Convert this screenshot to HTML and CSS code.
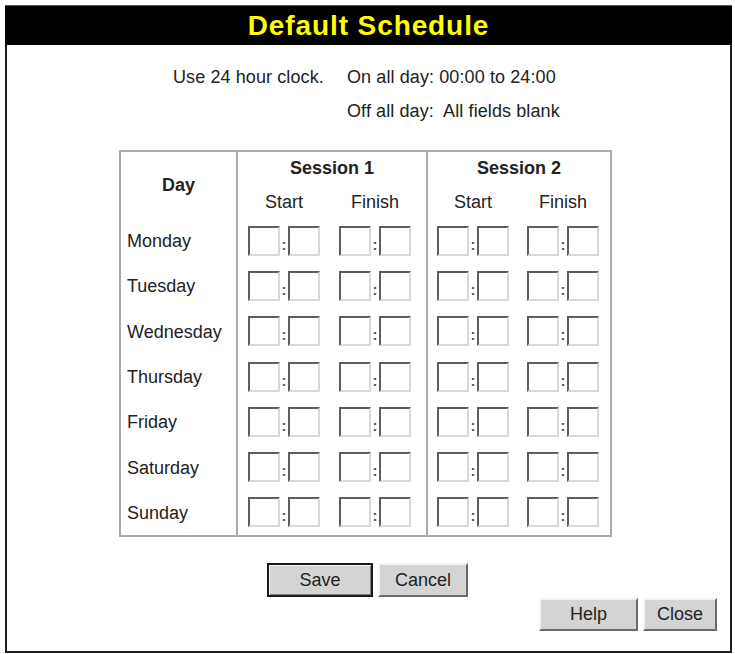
FILE: index.html
```html
<!DOCTYPE html>
<html>
<head>
<meta charset="utf-8">
<title>Default Schedule</title>
<link rel="stylesheet" href="styles.css">
</head>
<body>
<div class="frame">
  <div class="header"><h1 class="title">Default Schedule</h1></div>
  <div class="content">
    <div class="info">
      <span class="info-cell">Use 24 hour clock.</span>
      <span class="info-cell">On all day: 00:00 to 24:00</span>
      <span class="info-cell"></span>
      <span class="info-cell">Off all day:&nbsp; All fields blank</span>
    </div>

    <div class="sched">
      <div class="col col-day">
        <div class="day-head">Day</div>
        <div class="row day-label">Monday</div>
        <div class="row day-label">Tuesday</div>
        <div class="row day-label">Wednesday</div>
        <div class="row day-label">Thursday</div>
        <div class="row day-label">Friday</div>
        <div class="row day-label">Saturday</div>
        <div class="row day-label">Sunday</div>
      </div>

      <div class="col col-session s1">
        <div class="sess-title">Session 1</div>
        <div class="sub"><span class="sub-label">Start</span><span class="sub-label">Finish</span></div>
        <div class="row pairs"><span class="pair"><input class="tb"><span class="colon">:</span><input class="tb"></span><span class="pair"><input class="tb"><span class="colon">:</span><input class="tb"></span></div>
        <div class="row pairs"><span class="pair"><input class="tb"><span class="colon">:</span><input class="tb"></span><span class="pair"><input class="tb"><span class="colon">:</span><input class="tb"></span></div>
        <div class="row pairs"><span class="pair"><input class="tb"><span class="colon">:</span><input class="tb"></span><span class="pair"><input class="tb"><span class="colon">:</span><input class="tb"></span></div>
        <div class="row pairs"><span class="pair"><input class="tb"><span class="colon">:</span><input class="tb"></span><span class="pair"><input class="tb"><span class="colon">:</span><input class="tb"></span></div>
        <div class="row pairs"><span class="pair"><input class="tb"><span class="colon">:</span><input class="tb"></span><span class="pair"><input class="tb"><span class="colon">:</span><input class="tb"></span></div>
        <div class="row pairs"><span class="pair"><input class="tb"><span class="colon">:</span><input class="tb"></span><span class="pair"><input class="tb"><span class="colon">:</span><input class="tb"></span></div>
        <div class="row pairs"><span class="pair"><input class="tb"><span class="colon">:</span><input class="tb"></span><span class="pair"><input class="tb"><span class="colon">:</span><input class="tb"></span></div>
      </div>

      <div class="col col-session s2">
        <div class="sess-title">Session 2</div>
        <div class="sub"><span class="sub-label">Start</span><span class="sub-label">Finish</span></div>
        <div class="row pairs"><span class="pair"><input class="tb"><span class="colon">:</span><input class="tb"></span><span class="pair"><input class="tb"><span class="colon">:</span><input class="tb"></span></div>
        <div class="row pairs"><span class="pair"><input class="tb"><span class="colon">:</span><input class="tb"></span><span class="pair"><input class="tb"><span class="colon">:</span><input class="tb"></span></div>
        <div class="row pairs"><span class="pair"><input class="tb"><span class="colon">:</span><input class="tb"></span><span class="pair"><input class="tb"><span class="colon">:</span><input class="tb"></span></div>
        <div class="row pairs"><span class="pair"><input class="tb"><span class="colon">:</span><input class="tb"></span><span class="pair"><input class="tb"><span class="colon">:</span><input class="tb"></span></div>
        <div class="row pairs"><span class="pair"><input class="tb"><span class="colon">:</span><input class="tb"></span><span class="pair"><input class="tb"><span class="colon">:</span><input class="tb"></span></div>
        <div class="row pairs"><span class="pair"><input class="tb"><span class="colon">:</span><input class="tb"></span><span class="pair"><input class="tb"><span class="colon">:</span><input class="tb"></span></div>
        <div class="row pairs"><span class="pair"><input class="tb"><span class="colon">:</span><input class="tb"></span><span class="pair"><input class="tb"><span class="colon">:</span><input class="tb"></span></div>
      </div>
    </div>

    <div class="actions">
      <button class="btn btn-default btn-save">Save</button>
      <button class="btn btn-cancel">Cancel</button>
    </div>
    <div class="actions-right">
      <button class="btn btn-help">Help</button>
      <button class="btn btn-close">Close</button>
    </div>
  </div>
</div>
</body>
</html>
```

FILE: styles.css
```css
* { box-sizing: border-box; }

html, body {
  margin: 0;
  padding: 0;
  background: #ffffff;
}

body {
  font-family: "Liberation Sans", Arial, sans-serif;
  font-size: 18px;
  color: #222222;
}

.frame {
  margin: 5px 0 0 5px;
  width: 727px;
  height: 648px;
  border: 2px solid #1e1e1e;
  border-top: none;
  display: flex;
  flex-direction: column;
}

.header {
  margin: 0 -2px;
  height: 40px;
  background: #000000;
  border-top: 1px solid #555;
  display: flex;
  align-items: center;
  justify-content: center;
}

.title {
  margin: 0;
  font-family: "Liberation Sans", Arial, sans-serif;
  font-weight: bold;
  font-size: 28px;
  letter-spacing: 0.9px;
  color: #ffff00;
  line-height: 1;
}

.content {
  flex: 1;
  display: flex;
  flex-direction: column;
}

.info {
  margin: 15px 0 0 166px;
  display: grid;
  grid-template-columns: 154px auto;
  grid-auto-rows: 34px;
  column-gap: 20px;
  justify-content: start;
  align-items: center;
}

.info-cell { white-space: nowrap; letter-spacing: 0.1px; }

.sched {
  margin: 22px 0 0 112px;
  width: 493px;
  display: flex;
  border: 2px solid #ababab;
}

.col { display: flex; flex-direction: column; }

.col-day { width: 115px; }

.col-session { border-left: 2px solid #ababab; }
.s1 { width: 190px; }
.s2 { width: 184px; }

.day-head {
  height: 66px;
  display: flex;
  align-items: center;
  justify-content: center;
  font-weight: bold;
}

.row { height: 45.3px; display: flex; align-items: center; }

.day-label { padding-left: 6px; padding-top: 2px; }

.sess-title {
  height: 32px;
  display: flex;
  align-items: center;
  justify-content: center;
  font-weight: bold;
}

.sub {
  height: 34px;
  display: flex;
  align-items: center;
  padding-top: 2px;
}

.s1 .sub, .s1 .pairs { padding-left: 10px; gap: 19px; }
.s2 .sub, .s2 .pairs { padding-left: 9px; gap: 18px; }

.sub-label { width: 72px; text-align: center; }

.pair { display: flex; align-items: center; width: 72px; }

.tb {
  -webkit-appearance: none;
  appearance: none;
  width: 32px;
  height: 30px;
  margin: 0;
  padding: 0;
  background: #ffffff;
  border-style: solid;
  border-width: 2px;
  border-color: #5e5e5e #d8d8d8 #d8d8d8 #5e5e5e;
  border-radius: 0;
  outline: none;
}

.colon {
  width: 8px;
  height: 30px;
  display: flex;
  align-items: flex-end;
  justify-content: center;
  font-size: 15px;
  font-weight: bold;
  line-height: 1;
  padding-bottom: 4px;
  color: #555;
}

.actions {
  margin-top: 26px;
  display: flex;
  justify-content: center;
  gap: 5px;
  padding-right: 2px;
}

.actions-right {
  margin-top: 1px;
  display: flex;
  justify-content: flex-end;
  gap: 5px;
  padding-right: 13px;
}

.btn {
  margin: 0;
  padding: 0;
  font-family: "Liberation Sans", Arial, sans-serif;
  font-size: 18px;
  color: #222222;
  background: #d4d4d4;
  border-style: solid;
  border-width: 2px;
  border-color: #f4f4f4 #6a6a6a #6a6a6a #f4f4f4;
}

.btn-save { width: 106px; height: 34px; border-color: #1a1a1a; box-shadow: inset 1px 1px 0 #f4f4f4, inset -1px -1px 0 #808080; }
.btn-cancel { width: 90px; height: 34px; }
.btn-help { width: 99px; height: 33px; }
.btn-close { width: 74px; height: 33px; }
```
